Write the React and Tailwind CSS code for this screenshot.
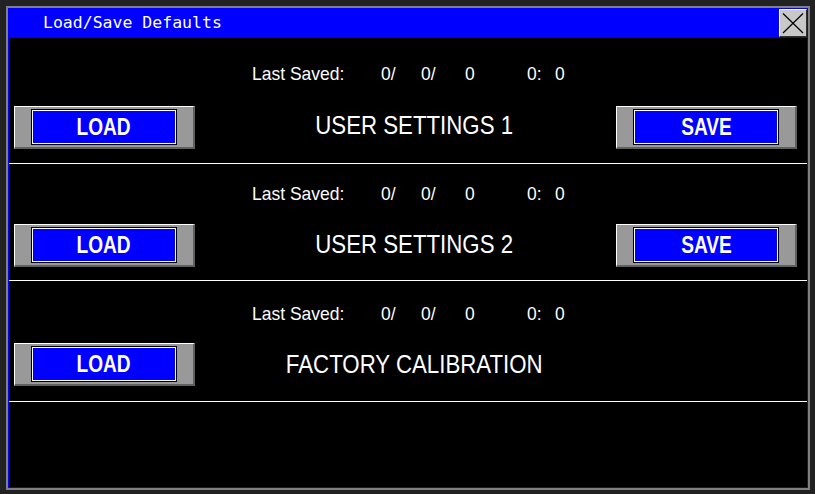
import React from "react";

function HmiButton({ label }) {
  return (
    <div className="w-[181px] h-[43px] shrink-0 bg-[#999999] border-t border-l border-t-white border-l-white border-b-2 border-r-2 border-b-[#606060] border-r-[#606060] pl-[16px] pt-[2px]">
      <div className="w-[146px] h-[36px] border border-black">
        <div className="w-full h-full border border-white bg-[#0000ff] flex items-center justify-center">
          <span className="inline-block scale-x-[0.83] text-white font-bold text-[23px] leading-none font-['Liberation_Sans',Arial,sans-serif]">
            {label}
          </span>
        </div>
      </div>
    </div>
  );
}

function LastSaved() {
  const t = "inline-block origin-left scale-x-[0.92] text-white text-[19px] leading-[20px] font-['Liberation_Sans',Arial,sans-serif]";
  return (
    <div className="flex h-[20px] pl-[243px]">
      <div className="w-[129px]"><span className={t}>Last Saved:</span></div>
      <div className="w-[40px]"><span className={t}>0/</span></div>
      <div className="w-[44px]"><span className={t}>0/</span></div>
      <div className="w-[62px]"><span className={t}>0</span></div>
      <div className="w-[28px]"><span className={t}>0:</span></div>
      <div className="w-[20px]"><span className={t}>0</span></div>
    </div>
  );
}

function Row({ title, save, pt, mt, pb, tb }) {
  return (
    <div className="border-b border-white" style={{ paddingTop: pt, paddingBottom: pb }}>
      <LastSaved />
      <div className="flex items-center h-[43px] pl-[5px] pr-[10px]" style={{ marginTop: mt }}>
        <HmiButton label="LOAD" />
        <div className="flex-1 flex justify-center pl-[18px]" style={{ paddingBottom: tb }}>
          <span className="inline-block scale-x-[0.89] text-white text-[25px] leading-none whitespace-nowrap font-['Liberation_Sans',Arial,sans-serif]">
            {title}
          </span>
        </div>
        {save ? <HmiButton label="SAVE" /> : <div className="w-[181px] shrink-0" />}
      </div>
    </div>
  );
}

export default function App() {
  return (
    <div className="w-[815px] h-[494px] bg-[#222222] pt-[6px] pl-[6px] pr-[5px] pb-[4px]">
      <div className="w-full h-full border-2 border-[#808080]">
        <div className="w-full h-full border border-[#0000ff] bg-black flex flex-col">
          <div className="h-[29px] bg-[#0000ff] flex items-start shrink-0">
            <div className="flex-1 h-full flex items-center pl-[34px] pb-[1px]">
              <span className="text-white text-[16.5px] leading-none font-['DejaVu_Sans_Mono',monospace]">
                Load/Save Defaults
              </span>
            </div>
            <div className="w-[28px] h-[28px] bg-[#c8c8c8] border-t border-l border-t-white border-l-white border-b border-r border-b-[#303030] border-r-[#303030]">
              <svg width="26" height="26" viewBox="0 0 26 26">
                <line x1="3" y1="3.5" x2="23" y2="23" stroke="black" strokeWidth="1.2" />
                <line x1="23" y1="3.5" x2="3" y2="23" stroke="black" strokeWidth="1.2" />
              </svg>
            </div>
          </div>
          <Row title="USER SETTINGS 1" save pt={24} mt={24} pb={14} tb={4} />
          <Row title="USER SETTINGS 2" save pt={18} mt={22} pb={13} tb={2} />
          <Row title="FACTORY CALIBRATION" pt={21} mt={21} pb={15} tb={0} />
        </div>
      </div>
    </div>
  );
}
